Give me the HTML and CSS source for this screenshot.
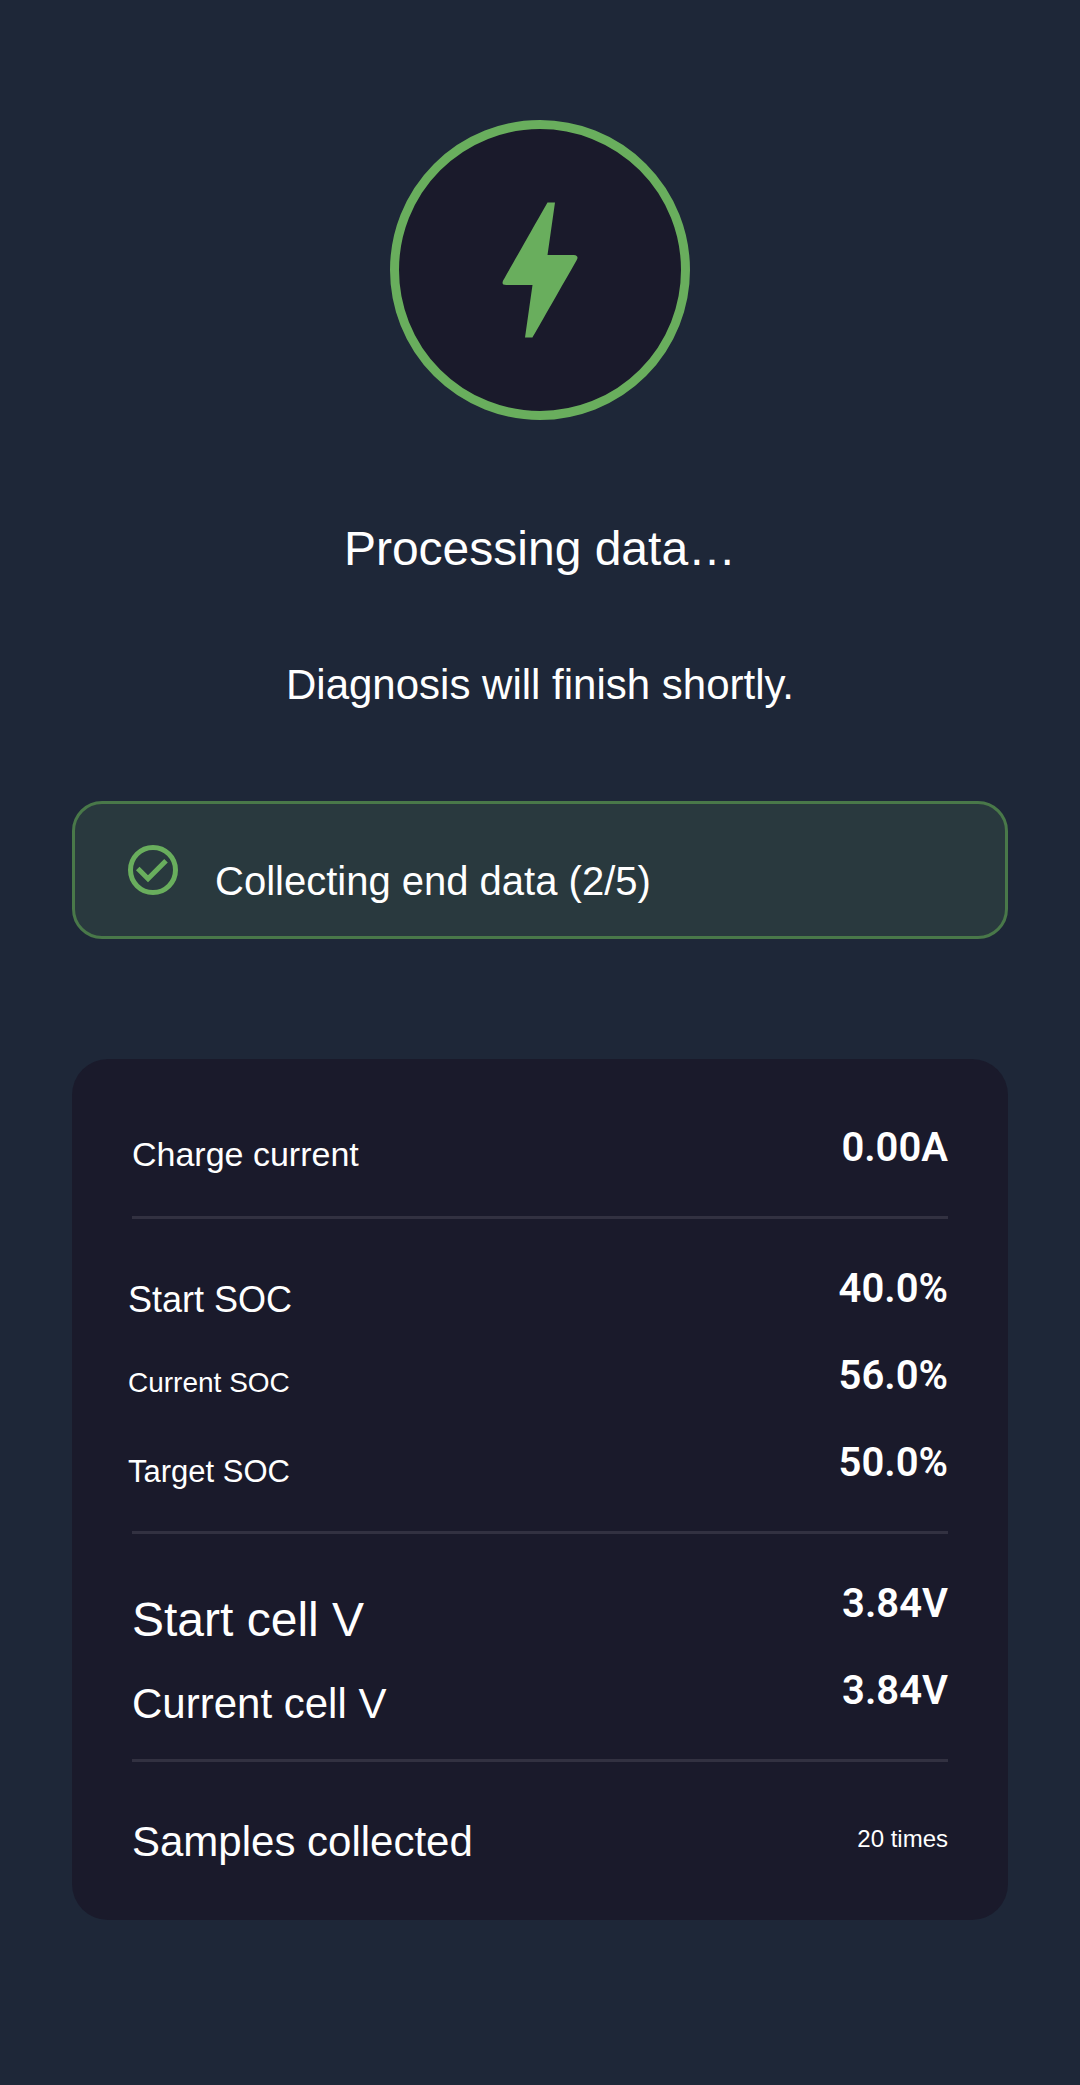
FILE: index.html
```html
<!DOCTYPE html>
<html lang="en">

<head>
    <meta charset="UTF-8">
    <meta name="viewport" content="width=device-width, initial-scale=1.0">
    <title>Battery diagnosis</title>
    <link rel="stylesheet" href="styles.css">
</head>

<body>
    <main class="page">
        <div class="badge">
            <svg class="bolt" viewBox="0 0 24 24" aria-hidden="true">
                <path d="M11 21h-1l1-7H7.5c-.58 0-.57-.32-.38-.66.19-.34.05-.08.07-.12C8.48 10.94 10.42 7.54 13 3h1l-1 7h3.5c.49 0 .56.33.47.51l-.07.15C12.96 17.55 11 21 11 21z"/>
            </svg>
        </div>
        <h1 class="title">Processing data…</h1>
        <p class="subtitle">Diagnosis will finish shortly.</p>

        <div class="status" role="status">
            <svg class="check" viewBox="0 0 24 24" aria-hidden="true">
                <circle cx="12" cy="12" r="9"/>
                <path d="M5.9 11.4L10 15.5l7.2-7.2"/>
            </svg>
            <span class="status-text">Collecting end data (2/5)</span>
        </div>

        <div class="card">
            <dl class="group single">
                <div class="row"><dt class="size-34">Charge current</dt><dd>0.00A</dd></div>
            </dl>
            <dl class="group soc">
                <div class="row"><dt class="size-36">Start SOC</dt><dd>40.0%</dd></div>
                <div class="row"><dt class="size-28">Current SOC</dt><dd>56.0%</dd></div>
                <div class="row"><dt class="size-31">Target SOC</dt><dd>50.0%</dd></div>
            </dl>
            <dl class="group">
                <div class="row"><dt class="size-48">Start cell V</dt><dd>3.84V</dd></div>
                <div class="row"><dt class="size-42">Current cell V</dt><dd>3.84V</dd></div>
            </dl>
            <dl class="group single">
                <div class="row"><dt class="size-42">Samples collected</dt><dd class="count">20 times</dd></div>
            </dl>
        </div>
    </main>
</body>

</html>
```
FILE: styles.css
```css
* {
    padding: 0;
    margin: 0;
    box-sizing: border-box;
}

body {
    min-height: 100vh;
    background-color: #1e2738;
    color: #fff;
    font-family: "Liberation Sans", Arial, sans-serif;
}

.page {
    padding: 120px 72px;
}

/* badge */
.badge {
    display: flex;
    align-items: center;
    justify-content: center;
    width: 300px;
    height: 300px;
    margin: 0 auto 101px;
    background-color: #1a1a2b;
    border: 9px solid #69ae5d;
    border-radius: 50%;
}

.bolt {
    width: 180px;
    height: 180px;
    flex-shrink: 0;
    fill: #69ae5d;
}

.title {
    margin-bottom: 84px;
    font-size: 48px;
    font-weight: normal;
    line-height: 56px;
    text-align: center;
}

.subtitle {
    margin-bottom: 92px;
    font-size: 42px;
    line-height: 48px;
    text-align: center;
}

/* status */
.status {
    display: flex;
    align-items: flex-start;
    gap: 32px;
    margin-bottom: 120px;
    padding: 36px 48px 35px;
    background-color: #29393e;
    border: 3px solid #497849;
    border-radius: 30px;
}

.check {
    width: 60px;
    height: 60px;
    flex-shrink: 0;
    fill: none;
    stroke: #69ae5d;
    stroke-width: 2;
}

.status-text {
    padding-top: 21px;
    font-size: 40px;
    line-height: 1;
}

/* card */
.card {
    padding: 60px;
    background-color: #1a1a2b;
    border-radius: 36px;
}

.group {
    display: flex;
    flex-direction: column;
    gap: 30px;
}

.group + .group {
    margin-top: 40px;
    padding-top: 41px;
    border-top: 3px solid #323141;
}

.row {
    display: flex;
    align-items: flex-start;
    justify-content: space-between;
    height: 57px;
}

dt {
    padding-top: 21px;
    line-height: 1;
}

.single dt {
    padding-top: 18px;
}

.soc dt {
    margin-left: -4px;
    padding-top: 22px;
}

dd {
    font-family: Roboto, sans-serif;
    font-size: 40px;
    font-weight: 600;
    line-height: 57px;
}

dd.count {
    padding-top: 24px;
    font-family: "Liberation Sans", Arial, sans-serif;
    font-size: 24px;
    font-weight: normal;
    line-height: 1;
}

/* label sizes */
.size-28 {
    font-size: 28px;
}

.size-31 {
    font-size: 31px;
}

.size-34 {
    font-size: 34px;
}

.size-36 {
    font-size: 36px;
}

.size-42 {
    font-size: 42px;
}

.size-48 {
    font-size: 48px;
}
```
